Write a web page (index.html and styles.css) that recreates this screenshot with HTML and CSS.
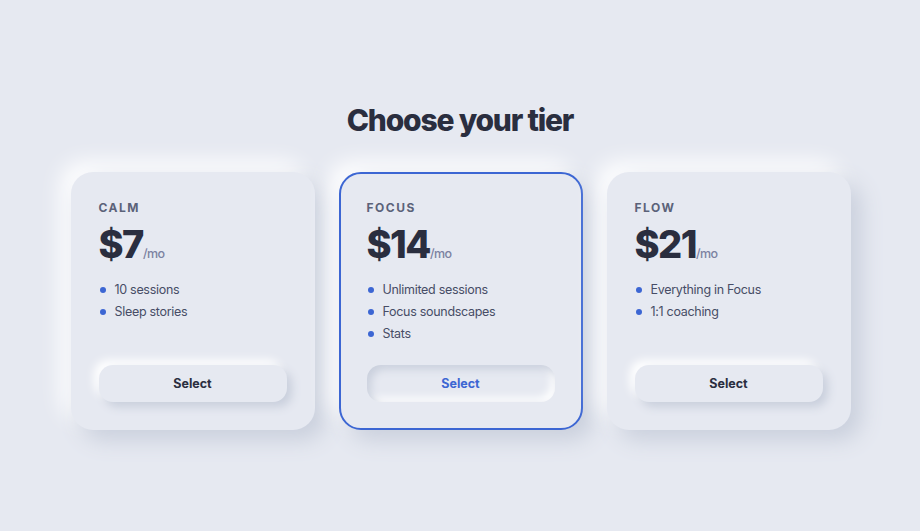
FILE: index.html
```html
<!DOCTYPE html>
<html lang="en">
<head>
    <meta charset="UTF-8">
    <meta name="viewport" content="width=device-width, initial-scale=1.0">
    <title>Choose your tier</title>
    <link rel="stylesheet" href="styles.css">
</head>
<body>
    <main class="pricing">
        <h1>Choose your tier</h1>

        <div class="tiers">
            <section class="tier">
                <h2 class="tier-name">CALM</h2>
                <div class="price">$7<span class="per">/mo</span></div>
                <ul class="features">
                    <li>10 sessions</li>
                    <li>Sleep stories</li>
                </ul>
                <button class="select-btn">Select</button>
            </section>

            <section class="tier selected">
                <h2 class="tier-name">FOCUS</h2>
                <div class="price">$14<span class="per">/mo</span></div>
                <ul class="features">
                    <li>Unlimited sessions</li>
                    <li>Focus soundscapes</li>
                    <li>Stats</li>
                </ul>
                <button class="select-btn">Select</button>
            </section>

            <section class="tier">
                <h2 class="tier-name">FLOW</h2>
                <div class="price">$21<span class="per">/mo</span></div>
                <ul class="features">
                    <li>Everything in Focus</li>
                    <li>1:1 coaching</li>
                </ul>
                <button class="select-btn">Select</button>
            </section>
        </div>
    </main>
</body>
</html>
```

FILE: styles.css
```css
body {
    margin: 0;
    font-family: Inter, "Noto Sans", sans-serif;
    background-color: #e6e9f1;
    color: #2a2e3f;
}

.pricing {
    min-height: 100vh;
    display: flex;
    flex-direction: column;
    align-items: center;
    justify-content: center;
}

h1 {
    margin: 0 0 34px;
    font-size: 30px;
    line-height: 36px;
    font-weight: 800;
    letter-spacing: -1.2px;
    color: #2a2e3f;
}

.tiers {
    display: flex;
    gap: 24px;
    margin-left: 1px;
}

.tier {
    width: 244px;
    height: 258px;
    box-sizing: border-box;
    padding: 26px;
    border: 2px solid transparent;
    border-radius: 22px;
    background-color: #e6e9f1;
    box-shadow: 10px 10px 22px #c9cfdc, -10px -10px 22px #ffffff;
    display: flex;
    flex-direction: column;
}

.tier.selected {
    border-color: #3c66d3;
}

.tier-name {
    margin: 0;
    font-size: 12px;
    line-height: 16px;
    font-weight: 700;
    letter-spacing: 1.5px;
    color: #5b6279;
}

.price {
    margin-top: 6px;
    font-size: 38px;
    line-height: 44px;
    font-weight: 800;
    letter-spacing: -1.5px;
    color: #2a2e3f;
}

.per {
    font-size: 12.5px;
    font-weight: 500;
    letter-spacing: -0.6px;
    color: #7b82a1;
}

.features {
    list-style: none;
    margin: 3px 0 0;
    padding: 0;
}

.features li {
    position: relative;
    padding-left: 16px;
    font-size: 12.5px;
    line-height: 22px;
    letter-spacing: -0.3px;
    color: #474d66;
}

.features li::before {
    content: "";
    position: absolute;
    left: 1px;
    top: 8px;
    width: 6px;
    height: 6px;
    border-radius: 50%;
    background-color: #3c66d3;
}

.select-btn {
    margin-top: auto;
    height: 37px;
    border: none;
    border-radius: 14px;
    background-color: #e6e9f1;
    box-shadow: 5px 5px 10px #c9cfdc, -5px -5px 10px #ffffff;
    font-family: inherit;
    font-size: 12.5px;
    font-weight: 700;
    color: #2a2e3f;
    cursor: pointer;
}

.selected .select-btn {
    color: #3c66d3;
    box-shadow: inset 4px 4px 8px #c9cfdc, inset -4px -4px 8px #ffffff;
}
```
